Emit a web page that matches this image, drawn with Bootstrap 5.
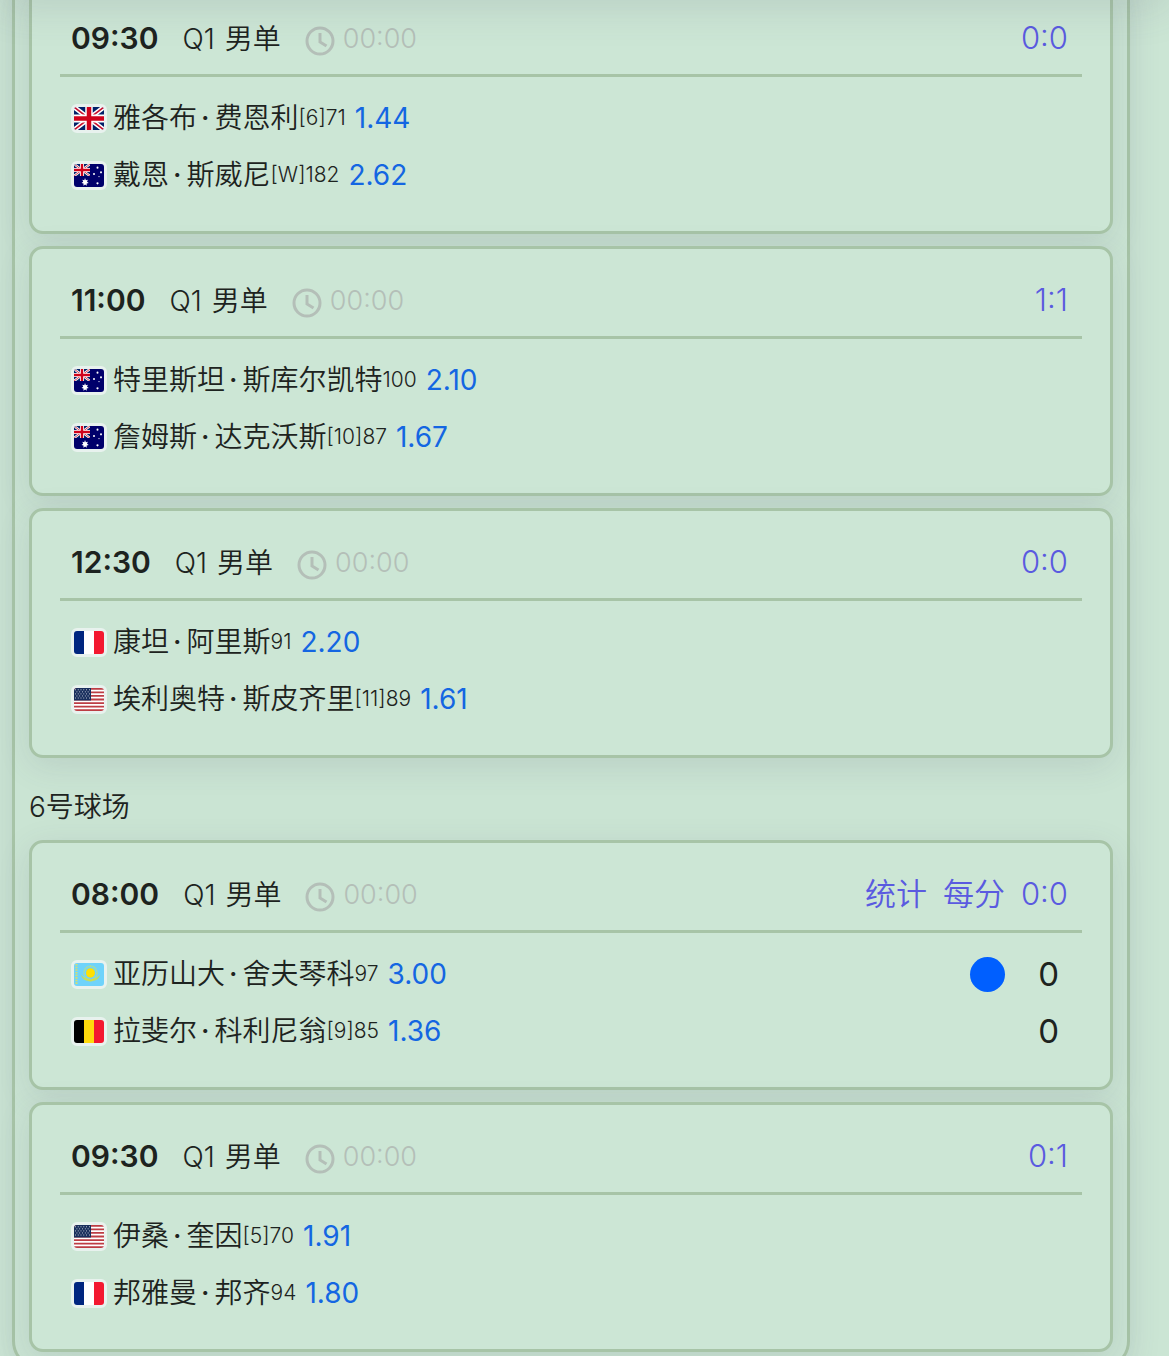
<!DOCTYPE html>
<html lang="zh-CN">
<head>
<meta charset="utf-8">
<meta name="viewport" content="width=device-width, initial-scale=1">
<title>赛程</title>
<link href="https://cdn.jsdelivr.net/npm/bootstrap@5.3.0/dist/css/bootstrap.min.css" rel="stylesheet">
<style>
  :root { --line: #a7c4a7; --paper: #cce6d5; --ink: #1d2320; --violet: #5a5ae0; --azure: #1466e2; --mute: #b4bfb8; }
  body { background: #cbe5d4; color: var(--ink); font-family: Inter, "Noto Sans CJK SC", sans-serif; font-size: 28px; line-height: 46px; font-weight: 350; }
  .viewport { padding: 0 39px 0 12px; }
  .viewport::before { content: ""; position: fixed; inset: -40px 0 auto 0; height: 40px; box-shadow: 0 4px 44px rgba(80, 80, 100, .18); z-index: 5; pointer-events: none; }
  .board { margin-top: -33px; padding: 14px; border: 3px solid var(--line); border-radius: 28px; background: #cae4d3; box-shadow: 0 8px 32px rgba(80, 80, 110, .13); }
  .court { font-size: 28px; line-height: 46px; padding: 26px 0 10px; margin: 0; font-weight: 350; }
  .stack { display: flex; flex-direction: column; gap: 12px; }
  .match { padding: 28px 28px 13px; border: 3px solid var(--line); border-radius: 14px; background: var(--paper); box-shadow: 0 8px 32px rgba(80, 80, 110, .13); }
  .match-head { padding: 0 14px 12px 11px; border-bottom: 3px solid var(--line); margin-bottom: 27px; }
  .when { font-size: 30px; font-weight: 600; }
  .round { gap: 10px; padding-top: 1px; }
  .clock { gap: 8px; font-size: 27px; color: var(--mute); padding-top: 1px; }
  .clock svg { width: 30px; height: 30px; margin-top: 3px; }
  .links { gap: 16px; font-size: 31px; }
  .links a { color: var(--violet); text-decoration: none; }
  .player { height: 57px; padding: 0 23px 0 11px; }
  .player > div { height: 28px; }
  .flag { width: 36px; height: 29px; border: 3px solid #e8f2ee; border-radius: 6px; margin: 0 6px 0 0; display: block; background: #e8f2ee; }
  .dot { margin: 0 5px 0 4px; font-weight: 500; }
  .rank { font-size: 21px; }
  .odds { color: var(--azure); margin-left: 9px; font-weight: 400; }
  .pts { font-size: 33px; font-weight: 400; }
  .serve { width: 35px; height: 35px; border-radius: 50%; background: #005fff; margin-right: 33px; }
</style>
<script src="https://cdn.jsdelivr.net/npm/bootstrap@5.3.0/dist/js/bootstrap.bundle.min.js"></script>
</head>
<body>
<svg width="0" height="0" class="position-absolute" aria-hidden="true">
  <defs>
    <symbol id="clock" viewBox="0 0 30 30"><g fill="none" stroke="currentColor" stroke-width="3"><circle cx="15" cy="15" r="13"/><path d="M15 7v9l6.500 4"/></g></symbol>
    <symbol id="gb" viewBox="0 0 60 44" preserveAspectRatio="none">
      <path fill="#012169" d="M0 0h60v44H0z"/><path d="M0 0l60 44M60 0L0 44" stroke="#fff" stroke-width="9"/>
      <path d="M0 0l30 22M60 44L30 22M60 0L30 22M0 44l30-22" stroke="#c8102e" stroke-width="3"/>
      <path d="M30 0v44M0 22h60" stroke="#fff" stroke-width="15"/><path d="M30 0v44M0 22h60" stroke="#d0021b" stroke-width="9"/>
    </symbol>
    <symbol id="au" viewBox="0 0 60 44" preserveAspectRatio="none">
      <path fill="#00006b" d="M0 0h60v44H0z"/>
      <svg width="32" height="23"><use href="#gb" width="32" height="23"/></svg>
      <g fill="#fff"><path d="M22 27l1.800 4 4-1-1.800 4 3.500 2.500-4.200 1 .2 4.200-3.300-2.700-3.300 2.700.2-4.200-4.200-1 3.500-2.500-1.800-4 4 1z"/>
      <circle cx="47" cy="7" r="2"/><circle cx="40" cy="19" r="2"/><circle cx="54" cy="16" r="2"/><circle cx="47" cy="37" r="2.200"/><circle cx="50" cy="24" r="1.200"/></g>
    </symbol>
    <symbol id="fr" viewBox="0 0 3 2" preserveAspectRatio="none"><path fill="#00267f" d="M0 0h1v2H0z"/><path fill="#fff" d="M1 0h1v2H1z"/><path fill="#f31830" d="M2 0h1v2H2z"/></symbol>
    <symbol id="be" viewBox="0 0 3 2" preserveAspectRatio="none"><path d="M0 0h1v2H0z"/><path fill="#ffd90c" d="M1 0h1v2H1z"/><path fill="#f31830" d="M2 0h1v2H2z"/></symbol>
    <symbol id="us" viewBox="0 0 60 39" preserveAspectRatio="none">
      <path fill="#fff" d="M0 0h60v39H0z"/><path stroke="#bd3d44" stroke-width="3" d="M0 1.500h60M0 7.500h60M0 13.500h60M0 19.500h60M0 25.500h60M0 31.500h60M0 37.500h60"/>
      <path fill="#192f5d" d="M0 0h34v21H0z"/><path stroke="#fff" stroke-width="1.600" stroke-dasharray="1.600 4" d="M2 3h30M5 6.500h27M2 10h30M5 13.500h27M2 17h30"/>
    </symbol>
    <symbol id="kz" viewBox="0 0 60 44" preserveAspectRatio="none">
      <path fill="#6fd3fb" d="M0 0h60v44H0z"/><path d="M5 2v40" stroke="#d8e06a" stroke-width="4" stroke-dasharray="3 2"/>
      <circle cx="33" cy="19" r="13" fill="none" stroke="#b9e08a" stroke-width="3" stroke-dasharray="2 1"/><circle cx="33" cy="19" r="9" fill="#ffe100"/>
      <path d="M15 24c3 9 10 9 18 11 8-2 15-2 18-11-3 6-10 5-18 8-8-3-15-2-18-8z" fill="#cfe04f" stroke="#cfe04f"/>
    </symbol>
  </defs>
</svg>

<main class="viewport vh-100 overflow-hidden">
  <div class="board">
    <section class="stack">
      <article class="match">
        <header class="match-head d-flex justify-content-between">
          <div class="d-flex gap-4"><span class="when">09:30</span><span class="round d-flex"><span>Q1</span> <span>男单</span></span><span class="clock d-flex align-items-center"><svg><use href="#clock"/></svg>00:00</span></div>
          <nav class="links d-flex"><a href="#">0:0</a></nav>
        </header>
        <div class="player"><div class="d-flex align-items-center"><svg class="flag"><use href="#gb"/></svg><span>雅各布<span class="dot">·</span>费恩利</span><span class="rank">[6]71</span><span class="odds">1.44</span></div></div>
        <div class="player"><div class="d-flex align-items-center"><svg class="flag"><use href="#au"/></svg><span>戴恩<span class="dot">·</span>斯威尼</span><span class="rank">[W]182</span><span class="odds">2.62</span></div></div>
      </article>
      <article class="match">
        <header class="match-head d-flex justify-content-between">
          <div class="d-flex gap-4"><span class="when">11:00</span><span class="round d-flex"><span>Q1</span> <span>男单</span></span><span class="clock d-flex align-items-center"><svg><use href="#clock"/></svg>00:00</span></div>
          <nav class="links d-flex"><a href="#">1:1</a></nav>
        </header>
        <div class="player"><div class="d-flex align-items-center"><svg class="flag"><use href="#au"/></svg><span>特里斯坦<span class="dot">·</span>斯库尔凯特</span><span class="rank">100</span><span class="odds">2.10</span></div></div>
        <div class="player"><div class="d-flex align-items-center"><svg class="flag"><use href="#au"/></svg><span>詹姆斯<span class="dot">·</span>达克沃斯</span><span class="rank">[10]87</span><span class="odds">1.67</span></div></div>
      </article>
      <article class="match">
        <header class="match-head d-flex justify-content-between">
          <div class="d-flex gap-4"><span class="when">12:30</span><span class="round d-flex"><span>Q1</span> <span>男单</span></span><span class="clock d-flex align-items-center"><svg><use href="#clock"/></svg>00:00</span></div>
          <nav class="links d-flex"><a href="#">0:0</a></nav>
        </header>
        <div class="player"><div class="d-flex align-items-center"><svg class="flag"><use href="#fr"/></svg><span>康坦<span class="dot">·</span>阿里斯</span><span class="rank">91</span><span class="odds">2.20</span></div></div>
        <div class="player"><div class="d-flex align-items-center"><svg class="flag"><use href="#us"/></svg><span>埃利奥特<span class="dot">·</span>斯皮齐里</span><span class="rank">[11]89</span><span class="odds">1.61</span></div></div>
      </article>
    </section>
    <h2 class="court">6号球场</h2>
    <section class="stack">
      <article class="match">
        <header class="match-head d-flex justify-content-between">
          <div class="d-flex gap-4"><span class="when">08:00</span><span class="round d-flex"><span>Q1</span> <span>男单</span></span><span class="clock d-flex align-items-center"><svg><use href="#clock"/></svg>00:00</span></div>
          <nav class="links d-flex"><a href="#">统计</a><a href="#">每分</a><a href="#">0:0</a></nav>
        </header>
        <div class="player"><div class="d-flex align-items-center"><svg class="flag"><use href="#kz"/></svg><span>亚历山大<span class="dot">·</span>舍夫琴科</span><span class="rank">97</span><span class="odds">3.00</span><span class="serve ms-auto"></span><span class="pts">0</span></div></div>
        <div class="player"><div class="d-flex align-items-center"><svg class="flag"><use href="#be"/></svg><span>拉斐尔<span class="dot">·</span>科利尼翁</span><span class="rank">[9]85</span><span class="odds">1.36</span><span class="pts ms-auto">0</span></div></div>
      </article>
      <article class="match">
        <header class="match-head d-flex justify-content-between">
          <div class="d-flex gap-4"><span class="when">09:30</span><span class="round d-flex"><span>Q1</span> <span>男单</span></span><span class="clock d-flex align-items-center"><svg><use href="#clock"/></svg>00:00</span></div>
          <nav class="links d-flex"><a href="#">0:1</a></nav>
        </header>
        <div class="player"><div class="d-flex align-items-center"><svg class="flag"><use href="#us"/></svg><span>伊桑<span class="dot">·</span>奎因</span><span class="rank">[5]70</span><span class="odds">1.91</span></div></div>
        <div class="player"><div class="d-flex align-items-center"><svg class="flag"><use href="#fr"/></svg><span>邦雅曼<span class="dot">·</span>邦齐</span><span class="rank">94</span><span class="odds">1.80</span></div></div>
      </article>
    </section>
  </div>
</main>
</body>
</html>
